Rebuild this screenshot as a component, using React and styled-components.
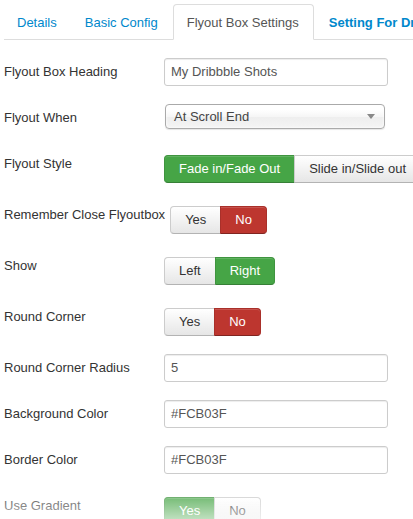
import React from "react";
import styled, { createGlobalStyle, css } from "styled-components";

const Global = createGlobalStyle`
  html, body { margin: 0; padding: 0; background: #fff; overflow: hidden; }
  body { font-family: "Liberation Sans", Arial, sans-serif; font-size: 13px; line-height: 18px; color: #333; }
`;

const Page = styled.div`
  padding: 4px 0 0 4px;
  width: 409px;
  overflow: hidden;
  position: relative;
  height: 515px;
`;

const Tabs = styled.ul`
  list-style: none;
  margin: 0;
  padding: 0;
  display: flex;
  white-space: nowrap;
  border-bottom: 1px solid #ddd;
`;

const Tab = styled.li`
  margin: 0 2px -1px 0;
  padding: 9px 12px 7px;
  border: 1px solid transparent;
  border-radius: 4px 4px 0 0;
  color: #0088cc;
  font-weight: ${(p) => (p.$bold ? "bold" : "normal")};
  padding-left: ${(p) => (p.$wide ? "13px" : "12px")};
  padding-right: ${(p) => (p.$wide ? "14px" : "12px")};
  ${(p) =>
    p.$active &&
    css`
      color: #555;
      background: #fff;
      border-color: #ddd #ddd transparent;
    `}
`;

const Form = styled.div`
  padding-top: 18px;
`;

const Row = styled.div`
  display: flex;
  align-items: flex-start;
  min-height: 28px;
  margin-bottom: 18px;
`;

const Label = styled.label`
  box-sizing: border-box;
  min-width: 160px;
  padding: 5px 5px 0 0;
  white-space: nowrap;
  color: #333;
`;

const TextInput = styled.div`
  box-sizing: border-box;
  width: 224px;
  height: 28px;
  padding: 4px 6px;
  border: 1px solid #ccc;
  border-radius: 3px;
  box-shadow: inset 0 1px 1px rgba(0, 0, 0, 0.075);
  color: #555;
`;

const Select = styled.div`
  box-sizing: border-box;
  width: 220px;
  height: 25px;
  margin-left: 1px;
  padding: 3px 8px;
  display: flex;
  align-items: center;
  justify-content: space-between;
  border: 1px solid #aaa;
  border-radius: 4px;
  background: linear-gradient(#fff 20%, #f6f6f6 50%, #eee 52%, #f4f4f4);
  box-shadow: 0 0 3px #fff inset, 0 1px 1px rgba(0, 0, 0, 0.1);
  color: #444;
`;

const Arrow = styled.span`
  width: 0;
  height: 0;
  border-left: 4px solid transparent;
  border-right: 4px solid transparent;
  border-top: 5px solid #888;
  margin-right: 1px;
`;

const Group = styled.div`
  display: flex;
  padding-top: 5px;
  white-space: nowrap;
`;

const tones = {
  green: css`
    color: #fff;
    background: #46a546;
    border-color: #3f943f #3f943f #367f36;
    box-shadow: inset 0 1px 0 rgba(255, 255, 255, 0.15);
  `,
  red: css`
    color: #fff;
    background: #bd362f;
    border-color: #a9302a #a9302a #802420;
    box-shadow: inset 0 1px 0 rgba(255, 255, 255, 0.15);
  `,
  plain: css`
    color: #333;
    background: linear-gradient(#fff, #e6e6e6);
    border-color: #ccc #ccc #b3b3b3;
    box-shadow: inset 0 1px 0 rgba(255, 255, 255, 0.2);
  `,
};

const Btn = styled.span`
  box-sizing: border-box;
  height: 28px;
  padding: 4px 14px;
  border: 1px solid;
  margin-left: -1px;
  ${(p) => tones[p.$tone]}
  &:first-child {
    margin-left: 0;
    border-radius: 4px 0 0 4px;
  }
  &:last-child {
    border-radius: 0 4px 4px 0;
  }
`;

const Fade = styled.div`
  position: absolute;
  left: 0;
  right: 0;
  bottom: 0;
  height: 36px;
  pointer-events: none;
  background: linear-gradient(rgba(255, 255, 255, 0), rgba(255, 255, 255, 0.65));
`;

const ButtonRow = ({ label, options }) => (
  <Row>
    <Label>{label}</Label>
    <Group>
      {options.map(([text, tone]) => (
        <Btn key={text} $tone={tone}>
          {text}
        </Btn>
      ))}
    </Group>
  </Row>
);

const InputRow = ({ label, value }) => (
  <Row>
    <Label>{label}</Label>
    <TextInput>{value}</TextInput>
  </Row>
);

export default function App() {
  return (
    <>
      <Global />
      <Page>
        <Tabs>
          <Tab>Details</Tab>
          <Tab>Basic Config</Tab>
          <Tab $active $wide>
            Flyout Box Settings
          </Tab>
          <Tab $bold>Setting For Dribbble</Tab>
        </Tabs>
        <Form>
          <InputRow label="Flyout Box Heading" value="My Dribbble Shots" />
          <Row>
            <Label>Flyout When</Label>
            <Select>
              <span>At Scroll End</span>
              <Arrow />
            </Select>
          </Row>
          <ButtonRow
            label="Flyout Style"
            options={[
              ["Fade in/Fade Out", "green"],
              ["Slide in/Slide out", "plain"],
            ]}
          />
          <ButtonRow
            label="Remember Close Flyoutbox"
            options={[
              ["Yes", "plain"],
              ["No", "red"],
            ]}
          />
          <ButtonRow
            label="Show"
            options={[
              ["Left", "plain"],
              ["Right", "green"],
            ]}
          />
          <ButtonRow
            label="Round Corner"
            options={[
              ["Yes", "plain"],
              ["No", "red"],
            ]}
          />
          <InputRow label="Round Corner Radius" value="5" />
          <InputRow label="Background Color" value="#FCB03F" />
          <InputRow label="Border Color" value="#FCB03F" />
          <ButtonRow
            label="Use Gradient"
            options={[
              ["Yes", "green"],
              ["No", "plain"],
            ]}
          />
        </Form>
        <Fade />
      </Page>
    </>
  );
}
